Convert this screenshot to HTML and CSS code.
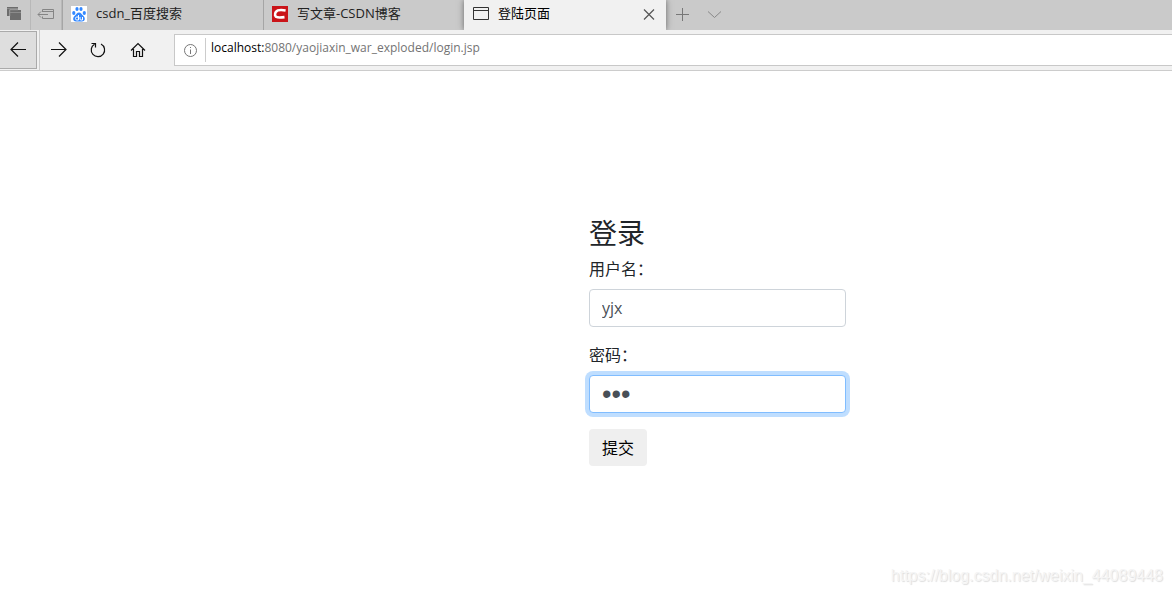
FILE: index.html
```html
<!DOCTYPE html>
<html lang="zh-CN">
<head>
<meta charset="utf-8">
<title>登陆页面</title>
<link rel="stylesheet" href="styles.css">
</head>
<body>
<header class="browser">
  <div class="tabs">
    <button class="strip-button" aria-label="已搁置的标签页">
      <svg width="30" height="30" viewBox="0 0 30 30"><path fill="#6d6d6d" d="M7 7h11v3h3v10H10v-4H7z"/><path fill="none" stroke="#cacaca" stroke-width=".6" d="M9.700 16v-6.300H18"/><path stroke="#8c8c8c" d="M7 8.500h11M10 12.500h11"/></svg>
    </button>
    <button class="strip-button" aria-label="搁置标签页">
      <svg width="30" height="30" viewBox="0 0 30 30" fill="none" stroke="#858585"><path d="M11.500 12V9.500h11v9h-11V16.500M11.500 11.500h11M7 14.500h10M10 11.500l-3 3 3 3"/></svg>
    </button>
    <a class="tab" href="#">
      <svg class="favicon" width="16" height="16" viewBox="0 0 16 16"><path fill="#fff" d="M0 0h16v16H0z"/><g fill="#3388ff"><ellipse cx="2.800" cy="7" rx="1.600" ry="2"/><ellipse cx="6" cy="3" rx="1.600" ry="2"/><ellipse cx="10" cy="3" rx="1.600" ry="2"/><ellipse cx="13.300" cy="7" rx="1.600" ry="2"/><path d="M8 6.500c2 0 2.500 1.700 4 3 3 2.400 2 6-1 6H5c-3 0-4-3.600-1-6 1.500-1.300 2-3 4-3z"/></g><path fill="none" stroke="#fff" d="M7.500 9v5H5.800q-1.300 0-1.300-1.500T5.800 11h1.700M9 11v2q0 1 1 1h1.500v-3"/></svg>
      <span>csdn_百度搜索</span>
    </a>
    <a class="tab" href="#">
      <svg class="favicon" width="16" height="16" viewBox="0 0 16 16"><path fill="#ca1419" d="M0 0h16v16H0z"/><path fill="none" stroke="#fff" stroke-width="2.600" d="M13.600 4.500c-4-.7-8.200-.8-9.800 1.500-1.500 2.200-.9 5 1.700 5.300 2.200.3 4.500.1 7-.2"/></svg>
      <span>写文章-CSDN博客</span>
    </a>
    <div class="tab tab-active">
      <svg class="favicon" width="16" height="16" viewBox="0 0 16 16" fill="none" stroke="#333"><path d="M.5 1.500h15v12H.5zM0 4.500h16"/></svg>
      <span>登陆页面</span>
      <button class="close" aria-label="关闭标签页"><svg width="12" height="12" viewBox="0 0 12 12" fill="none" stroke="#555" stroke-width="1.200"><path d="M1 .5l10 10M11 .5L1 10.500"/></svg></button>
    </div>
    <button class="tab-tool" aria-label="新建标签页"><svg width="14" height="14" viewBox="0 0 14 14" fill="none" stroke="#777"><path d="M0 6.500h13M6.500 0v13"/></svg></button>
    <button class="tab-tool" aria-label="标签页选项"><svg width="14" height="14" viewBox="0 0 14 14" fill="none" stroke="#888"><path d="M0 3.500l6.500 6 6.500-6"/></svg></button>
  </div>
  <div class="toolbar">
    <button class="nav back" aria-label="后退"><svg width="16" height="16" viewBox="0 0 16 16"><path d="M1 7.500h15M8 .5l-7 7 7 7"/></svg></button>
    <button class="nav forward" aria-label="前进"><svg width="16" height="16" viewBox="0 0 16 16"><path d="M0 7.500h15M8 .5l7 7-7 7"/></svg></button>
    <button class="nav" aria-label="刷新"><svg width="16" height="16" viewBox="0 0 16 16"><path d="M4.500 2.200a6.700 6.700 0 1 0 6.500-.2M1.500 1.500h4v4"/></svg></button>
    <button class="nav" aria-label="主页"><svg width="16" height="16" viewBox="0 0 16 16"><path d="M1 8.500l7-7 7 7M3.500 7v7.500h3v-5h3v5h3V7"/></svg></button>
    <div class="address">
      <svg class="info" width="13" height="13" viewBox="0 0 13 13" fill="none" stroke="#777"><circle cx="6.500" cy="6.500" r="6"/><path d="M6.500 5.500V10M6.500 3v1"/></svg>
      <span class="url"><b>localhost:</b>8080/yaojiaxin_war_exploded/login.jsp</span>
    </div>
  </div>
</header>
<main class="page">
  <form class="login">
    <h1>登录</h1>
    <label for="user">用户名：</label>
    <input id="user" type="text" value="yjx">
    <label for="password">密码：</label>
    <input id="password" class="focused" type="password" value="123">
    <button class="submit" type="submit">提交</button>
  </form>
</main>
<footer class="watermark">https://blog.csdn.net/weixin_44089448</footer>
</body>
</html>
```
FILE: styles.css
```css
* {
  box-sizing: border-box;
}

body {
  display: flex;
  flex-direction: column;
  min-height: 100vh;
  margin: 0;
  background: #fff;
  color: #212529;
  font: 16px/24px "Open Sans", "Noto Sans CJK SC", sans-serif;
}

button {
  padding: 0;
  border: 0;
  background: none;
  color: #000;
  font: inherit;
}

svg {
  display: block;
  flex: none;
}

.tabs {
  display: flex;
  height: 30px;
  overflow: hidden;
  background: #cacaca;
}

.strip-button {
  width: 31px;
  flex: none;
  border-right: 1px solid #b8b8b8;
}

.tab {
  display: flex;
  flex: 0 1 201px;
  gap: 9px;
  padding: 6px 8px;
  border-left: 1px solid #a5a5a5;
  color: #222;
  font-size: 13px;
  line-height: 14px;
  text-decoration: none;
  white-space: nowrap;
}

.tab-active {
  z-index: 1;
  flex-basis: 202px;
  border-left-color: #f1f1f1;
  background: #f1f1f1;
  box-shadow: 0 0 6px #666;
  color: #000;
}

.close {
  align-self: center;
  margin: 0 3px 0 auto;
}

.tab-tool {
  width: 32px;
  padding-left: 10px;
}

.toolbar {
  display: flex;
  height: 41px;
  border-bottom: 1px solid #ccc;
  background: #f1f1f1;
}

.nav {
  display: grid;
  width: 40px;
  flex: none;
  place-items: center;
}

.nav svg {
  fill: none;
  stroke: #111;
  stroke-width: 1.2;
}

.back {
  width: 37px;
  margin: 1px 2px 1px 0;
  border: 1px solid #aaa;
  border-left: 0;
  background: #dedede;
}

.forward {
  width: 39px;
  border-left: 1px solid #ccc;
}

.address {
  display: flex;
  flex: 1;
  height: 32px;
  margin: 4px 0 0 16px;
  padding-left: 9px;
  border: 1px solid #c8c8c8;
  border-right: 0;
  background: #fff;
}

.info {
  margin-top: 9px;
}

.url {
  height: 24px;
  margin: 3px 0 0 8px;
  padding-left: 5px;
  border-left: 1px solid #ccc;
  color: #737373;
  font-size: 12px;
  line-height: 20px;
}

.url b {
  color: #000;
  font-weight: 400;
}

.page {
  flex: 1;
  padding: 145px 0 0 calc(50% + 3px);
}

.login {
  display: flex;
  width: 257px;
  flex-direction: column;
}

h1 {
  margin: 0 0 7px;
  font-size: 28px;
  font-weight: 400;
  line-height: 34px;
}

label {
  margin-bottom: 8px;
}

input {
  width: 100%;
  height: 38px;
  margin: 0 0 16px;
  padding: 6px 12px;
  border: 1px solid #ced4da;
  border-radius: 4px;
  outline: 0;
  background: #fff;
  color: #495057;
  font: inherit;
}

.focused {
  padding: 0 12px;
  border-color: #80bdff;
  box-shadow: 0 0 0 4px #bfdeff;
  font-family: "Liberation Sans", sans-serif;
  font-size: 27px;
}

.submit {
  height: 37px;
  align-self: flex-start;
  padding: 0 13px;
  border-radius: 4px;
  background: #efefef;
}

.watermark {
  padding: 0 9px 6px 0;
  color: #f5f5f5;
  font-family: "Liberation Sans", sans-serif;
  text-align: right;
  text-shadow: 1px 1px 1px #ddd;
}
```
